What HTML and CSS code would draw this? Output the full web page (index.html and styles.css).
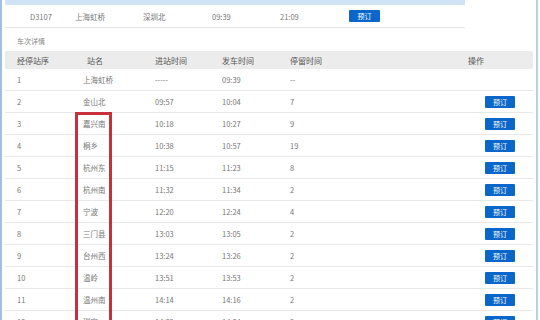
FILE: index.html
```html
<!DOCTYPE html>
<html lang="zh-CN">
<head>
    <meta charset="UTF-8">
    <title>车次详情</title>
    <link rel="stylesheet" href="styles.css">
</head>
<body>
    <div class="page">
        <div class="train-info">
            <div class="info-head"></div>
            <div class="info-row">
                <span class="c-no">D3107</span>
                <span class="c-from">上海虹桥</span>
                <span class="c-to">深圳北</span>
                <span class="c-dep">09:39</span>
                <span class="c-arr">21:09</span>
                <span class="c-op"><button class="book-btn">预订</button></span>
            </div>
        </div>

        <p class="section-title">车次详情</p>

        <table class="stops">
            <colgroup>
                <col class="w-seq">
                <col class="w-name">
                <col class="w-in">
                <col class="w-out">
                <col class="w-stay">
                <col class="w-op">
            </colgroup>
            <thead>
                <tr>
                    <th>经停站序</th>
                    <th>站名</th>
                    <th>进站时间</th>
                    <th>发车时间</th>
                    <th>停留时间</th>
                    <th class="op">操作</th>
                </tr>
            </thead>
            <tbody>
                <tr><td>1</td><td class="name">上海虹桥</td><td>-----</td><td>09:39</td><td>--</td><td class="op"></td></tr>
                <tr><td>2</td><td class="name">金山北</td><td>09:57</td><td>10:04</td><td>7</td><td class="op"><button class="book-btn">预订</button></td></tr>
                <tr><td>3</td><td class="name">嘉兴南</td><td>10:18</td><td>10:27</td><td>9</td><td class="op"><button class="book-btn">预订</button></td></tr>
                <tr><td>4</td><td class="name">桐乡</td><td>10:38</td><td>10:57</td><td>19</td><td class="op"><button class="book-btn">预订</button></td></tr>
                <tr><td>5</td><td class="name">杭州东</td><td>11:15</td><td>11:23</td><td>8</td><td class="op"><button class="book-btn">预订</button></td></tr>
                <tr><td>6</td><td class="name">杭州南</td><td>11:32</td><td>11:34</td><td>2</td><td class="op"><button class="book-btn">预订</button></td></tr>
                <tr><td>7</td><td class="name">宁波</td><td>12:20</td><td>12:24</td><td>4</td><td class="op"><button class="book-btn">预订</button></td></tr>
                <tr><td>8</td><td class="name">三门县</td><td>13:03</td><td>13:05</td><td>2</td><td class="op"><button class="book-btn">预订</button></td></tr>
                <tr><td>9</td><td class="name">台州西</td><td>13:24</td><td>13:26</td><td>2</td><td class="op"><button class="book-btn">预订</button></td></tr>
                <tr><td>10</td><td class="name">温岭</td><td>13:51</td><td>13:53</td><td>2</td><td class="op"><button class="book-btn">预订</button></td></tr>
                <tr><td>11</td><td class="name">温州南</td><td>14:14</td><td>14:16</td><td>2</td><td class="op"><button class="book-btn">预订</button></td></tr>
                <tr><td>12</td><td class="name">瑞安</td><td>14:32</td><td>14:34</td><td>2</td><td class="op"><button class="book-btn">预订</button></td></tr>
            </tbody>
        </table>

        <div class="highlight"></div>
    </div>
</body>
</html>
```

FILE: styles.css
```css
html, body {
    margin: 0;
    padding: 0;
    background: #fff;
}
body {
    font-family: "Noto Sans CJK SC", "Noto Sans", sans-serif;
    font-size: 7.5px;
    color: #777;
    overflow: hidden;
}
.page {
    position: relative;
    width: 534px;
    min-height: 340px;
    border-left: 2px solid #9fc0de;
    border-right: 2px solid #b9cfe2;
}
.train-info {
    width: 460px;
    margin-left: 3px;
}
.info-head {
    height: 5px;
    background: #cfe2f6;
}
.info-row {
    display: flex;
    align-items: center;
    height: 22px;
    border-bottom: 1px solid #e6e6e6;
}
.info-row span {
    display: block;
}
.c-no { width: 70px; padding-left: 25px; box-sizing: border-box; }
.c-from { width: 68px; }
.c-to { width: 69px; }
.c-dep { width: 68px; }
.c-arr { width: 69px; }
.c-op { flex: 1; }
.info-row .book-btn {
    width: 31px;
    height: 12px;
}
.section-title {
    margin: 0;
    padding: 8px 0 0 15px;
    height: 15px;
    color: #888;
    font-size: 7px;
    line-height: 11px;
}
.stops {
    margin-left: 3px;
    width: 528px;
    border-collapse: collapse;
    table-layout: fixed;
}
.w-seq { width: 70px; }
.w-name { width: 68px; }
.w-in { width: 67px; }
.w-out { width: 68px; }
.w-stay { width: 177px; }
.w-op { width: 78px; }
.stops th {
    height: 18px;
    padding: 0 0 0 12px;
    background: #ececec;
    color: #555;
    font-size: 8px;
    font-weight: normal;
    text-align: left;
}
.stops th.op {
    padding-left: 13px;
}
.stops td {
    height: 21px;
    padding: 0 0 0 12px;
    border-bottom: 1px solid #e8e8e8;
    text-align: left;
}
.stops td.name {
    padding-left: 8px;
}
.stops td.op {
    padding: 0 18px 0 0;
    text-align: right;
}
.book-btn {
    width: 30px;
    height: 12px;
    padding: 0;
    border: none;
    border-radius: 1px;
    background: #0a67c9;
    color: #fff;
    font-family: inherit;
    font-size: 7px;
    line-height: 12px;
    vertical-align: middle;
    cursor: pointer;
}
.highlight {
    position: absolute;
    left: 73px;
    top: 112px;
    width: 31px;
    height: 240px;
    border: 3px solid #c8303a;
}
```
